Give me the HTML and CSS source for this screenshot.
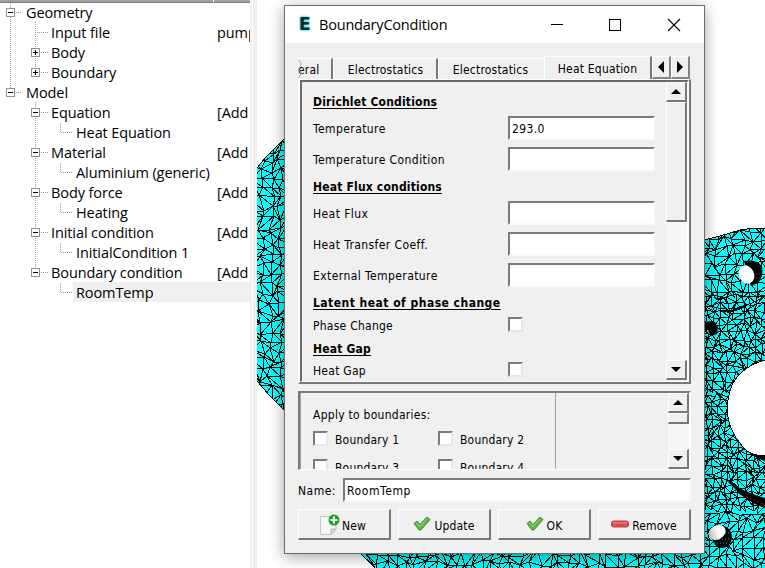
FILE: index.html
```html
<!DOCTYPE html>
<html lang="en">
<head>
<meta charset="utf-8">
<title>BoundaryCondition</title>
<link rel="stylesheet" href="styles.css">
</head>
<body>
<div class="app">
  <aside class="tree">
    <div class="tree-head"><span></span><span></span></div>
    <svg class="guides" width="80" height="310" fill="none" stroke="#9a9a9a" stroke-dasharray="1 1" shape-rendering="crispEdges">
      <path d="M10.5 3V93M35.5 22V73M35.5 102V273M16 12.5H22M16 92.5H22M37 32.5H48M41 52.5H48M41 72.5H48M41 112.5H48M41 152.5H48M41 192.5H48M41 232.5H48M41 272.5H48"/>
      <path d="M60.5 123V132.500H72M60.500 163V172.500H72M60.500 203V212.500H72M60.500 243V252.500H72M60.500 283V292.500H72"/>
    </svg>
    <ul class="rows">
      <li class="l0"><i class="tog"></i><span>Geometry</span></li>
      <li class="l1 leaf"><span>Input file</span><b>pump</b></li>
      <li class="l1"><i class="tog plus"></i><span>Body</span></li>
      <li class="l1"><i class="tog plus"></i><span>Boundary</span></li>
      <li class="l0"><i class="tog"></i><span>Model</span></li>
      <li class="l1"><i class="tog"></i><span>Equation</span><b>[Add</b></li>
      <li class="l2"><span>Heat Equation</span></li>
      <li class="l1"><i class="tog"></i><span>Material</span><b>[Add</b></li>
      <li class="l2"><span>Aluminium (generic)</span></li>
      <li class="l1"><i class="tog"></i><span>Body force</span><b>[Add</b></li>
      <li class="l2"><span>Heating</span></li>
      <li class="l1"><i class="tog"></i><span>Initial condition</span><b>[Add</b></li>
      <li class="l2"><span>InitialCondition 1</span></li>
      <li class="l1"><i class="tog"></i><span>Boundary condition</span><b>[Add</b></li>
      <li class="l2 selected"><span>RoomTemp</span></li>
    </ul>
  </aside>
  <div class="splitter"></div>
  <main class="view">
    <svg id="mesh" width="508" height="568" viewBox="257 0 508 568">
      <defs><clipPath id="part"><path d="M257 168L266 157L275 148L284 139H320V446L284 410L270 396L257 381ZM360 553L375 568H765V228H755L740 230L720 236L704 240H600V553Z"/></clipPath>
      <linearGradient id="g"><stop offset="0" stop-color="#ccc"/><stop offset=".6" stop-color="#fff"/></linearGradient></defs>
      <g clip-path="url(#part)">
        <rect x="257" width="508" height="568" fill="#00ffff"/>
        <path id="lines" fill="none" stroke="#000" stroke-width="1" shape-rendering="crispEdges"/>
      </g>
      <g fill="none" stroke="#000" shape-rendering="crispEdges">
        <path d="M257 168L266 157L275 148L284 139M257 381L270 396L284 410M360 553L375 568M704 240L720 236L740 230L755 228H765"/>
        <path d="M705 303Q730 318 765 296" stroke-width="1"/>
        <path d="M720 311Q735 313 746 305" stroke-width="2"/>
      </g>
      <path d="M744 261Q758 259 762 267Q764 276 758 283L751 286Z"/>
      <path d="M753 266h8M755 270h8M756 274h6M756 278h5" stroke="#066" stroke-dasharray="1 2" fill="none"/>
      <ellipse cx="746.500" cy="274.500" rx="7.500" ry="9.500" transform="rotate(-25 746.500 274.500)" fill="#fff"/>
      <path d="M704 322l9-1 5 6-1 7-6 2-3-6h-4z"/>
      <path d="M765 360Q743 366 733 383Q728 393 727 410Q729 434 747 451Q755 456 765 456Z" fill="#fff" stroke="#000" shape-rendering="crispEdges"/>
      <path d="M747 451Q755 458 765 461V456Q755 456 747 451Z"/>
      <path d="M726 480Q745 493 765 498V508Q745 501 734 488Z"/>
      <path d="M746 497L765 505" stroke="#700" stroke-width="2" stroke-dasharray="2 2"/>
      <ellipse cx="722" cy="537" rx="10" ry="11"/>
      <path d="M714 543h14M719 539h11M725 533h5" stroke="#066" stroke-width="2" stroke-dasharray="1 2"/>
      <ellipse cx="717" cy="532.500" rx="9" ry="7" transform="rotate(-30 717 532.500)" fill="url(#g)"/>
    </svg>
  </main>
</div>

<section class="window">
  <header class="titlebar">
    <span class="logo">E</span>
    <h1>BoundaryCondition</h1>
    <svg class="winbtns" width="132" height="14" fill="none" stroke="#000">
      <path d="M0 6.500H12M58.500 1.500H69.500V12.500H58.500Z" shape-rendering="crispEdges"/>
      <path d="M117 1L129 13M129 1L117 13" stroke-width="1.100"/>
    </svg>
  </header>
  <div class="body">
    <nav class="tabs">
      <span class="tab t1"><svg class="tear" width="5" height="18" fill="none" stroke="#aaa"><path d="M.5 0l3 4-3 5 3 4-3 5"/></svg>eral</span>
      <span class="tab t2">Electrostatics</span>
      <span class="tab t3">Electrostatics</span>
      <span class="tab active">Heat Equation</span>
      <span class="tabbtn"><svg width="6" height="12"><path d="M6 0V12L0 6Z"/></svg></span>
      <span class="tabbtn"><svg width="6" height="12"><path d="M0 0V12L6 6Z"/></svg></span>
    </nav>
    <div class="pane">
      <div class="sunken">
        <div class="form">
          <h2>Dirichlet Conditions</h2>
          <label><span>Temperature</span><i class="field">293.0</i></label>
          <label><span>Temperature Condition</span><i class="field"></i></label>
          <h2>Heat Flux conditions</h2>
          <label><span>Heat Flux</span><i class="field"></i></label>
          <label><span>Heat Transfer Coeff.</span><i class="field"></i></label>
          <label><span>External Temperature</span><i class="field"></i></label>
          <h2 class="wide">Latent heat of phase change</h2>
          <label class="chk"><span>Phase Change</span><i class="box"></i></label>
          <h2 class="last">Heat Gap</h2>
          <label class="chk"><span>Heat Gap</span><i class="box"></i></label>
        </div>
        <div class="scroll">
          <span class="sbtn"><svg width="10" height="5"><path d="M0 5H10L5 0Z"/></svg></span>
          <span class="thumb"></span><span class="track"></span>
          <span class="sbtn"><svg width="10" height="5"><path d="M0 0H10L5 5Z"/></svg></span>
        </div>
      </div>
    </div>
    <div class="bounds">
      <div class="blist">
        <p>Apply to boundaries:</p>
        <div class="checks">
          <span><i class="box"></i>Boundary 1</span><span><i class="box"></i>Boundary 2</span>
          <span><i class="box"></i>Boundary 3</span><span><i class="box"></i>Boundary 4</span>
        </div>
      </div>
      <div class="scroll">
        <span class="sbtn"><svg width="10" height="5"><path d="M0 5H10L5 0Z"/></svg></span>
        <span class="thumb"></span><span class="track"></span>
        <span class="sbtn"><svg width="10" height="5"><path d="M0 0H10L5 5Z"/></svg></span>
      </div>
    </div>
    <div class="name"><span>Name:</span><i class="field">RoomTemp</i></div>
    <div class="buttons">
      <button class="new"><svg width="21" height="21"><path d="M1.500 2.500H17V15L12 20.500H1.500Z" fill="#f6f6f6" stroke="#c4c4c4"/><path d="M12 20.500V15H17Z" fill="#ddd" stroke="#bbb"/><circle cx="15" cy="6" r="5.500" fill="#19a51e"/><path d="M15 2.500V9.500M11.500 6H18.500" stroke="#fff" stroke-width="2"/></svg><span>New</span></button>
      <button class="upd"><svg width="18" height="16"><path d="M1 7.500L4 5L7 8.500L14 1L17 3.500L8 14H6Z" fill="#58b83c" stroke="#4a8d3c" stroke-linejoin="round"/><path d="M3 7L7 10.500L14 3" fill="none" stroke="#9bd48c"/></svg><span>Update</span></button>
      <button class="ok"><svg width="18" height="16"><path d="M1 7.500L4 5L7 8.500L14 1L17 3.500L8 14H6Z" fill="#58b83c" stroke="#4a8d3c" stroke-linejoin="round"/><path d="M3 7L7 10.500L14 3" fill="none" stroke="#9bd48c"/></svg><span>OK</span></button>
      <button class="rem"><svg width="18" height="8"><rect x=".5" y="1" width="17" height="6" rx="2" fill="#dc4a50" stroke="#b8484c"/><path d="M2 3H16" stroke="#ef9498"/></svg><span>Remove</span></button>
    </div>
  </div>
</section>
<script src="mesh.js"></script>
</body>
</html>
```
FILE: styles.css
```css
* { box-sizing: border-box; }
body { margin: 0; width: 765px; height: 568px; overflow: hidden; background: #fff; color: #000; font: 12px "DejaVu Sans Condensed", "DejaVu Sans", sans-serif; letter-spacing: .2px; }
i, b { font-style: normal; font-weight: normal; }
.app { display: flex; height: 568px; }

.tree { position: relative; width: 250px; flex: none; overflow: hidden; font: 14.5px "Open Sans", sans-serif; }
.tree-head { display: flex; height: 3px; background: #a0a0a0; border-bottom: 1px solid #808080; }
.tree-head span:first-child { width: 214px; border-right: 1px solid #fff; }
.guides { position: absolute; left: 0; top: 0; }
.rows { list-style: none; margin: 0; padding: 0; position: relative; }
.rows li { display: flex; align-items: center; height: 20px; white-space: pre; letter-spacing: -.1px; line-height: 18px; padding-bottom: 1px; }
.rows li span { flex: none; }
.rows b { margin-left: auto; width: 33px; flex: none; }
.l0 { padding-left: 6px; }
.l1 { padding-left: 31px; }
.l1.leaf { padding-left: 51px; }
.l2 { padding-left: 3px; margin-left: 73px; }
.rows .selected { background: #f0f0f0; margin-top: -1px; padding: 1px 0 0 3px; }
.tog { width: 9px; height: 9px; flex: none; margin-right: 11px; border: 1px solid #919191; background: linear-gradient(#000, #000) center/5px 1px no-repeat #fff; }
.plus { background: linear-gradient(#000, #000) center/5px 1px no-repeat, linear-gradient(#000, #000) center/1px 5px no-repeat #fff; }
.splitter { width: 7px; flex: none; background: #f0f0f0; border-left: 2px solid #f0f0f0; box-shadow: inset 1px 0 #fff; }
.view svg { display: block; }

.window { position: absolute; left: 284px; top: 5px; width: 421px; height: 549px; border: 1px solid #6d6d6d; background: #f0f0f0; box-shadow: 0 3px 14px rgba(0,0,0,.36); display: flex; flex-direction: column; }
.titlebar { display: flex; align-items: center; height: 37px; background: #fff; padding-left: 14px; flex: none; }
.logo { width: 10px; font: bold 17px/17px "DejaVu Sans", sans-serif; color: #222; text-shadow: 0 0 2px #0ee, 0 0 3px #0ee; }
h1 { margin: 0 0 0 10px; font: 14.5px "Open Sans", sans-serif; letter-spacing: -.2px; }
.winbtns { margin-left: auto; margin-right: 21px; width: 132px; }
.body { padding: 13px 13px 13px; display: flex; flex-direction: column; }

.tabs { display: flex; height: 23px; align-items: flex-end; flex: none; white-space: nowrap; }
.tab { height: 21px; flex: none; display: flex; align-items: center; justify-content: center; padding-top: 1px; border-top: 1px solid #fff; border-right: 2px solid #787878; border-left: 1px solid #fff; }
.t1 { width: 35px; position: relative; border-left: 0; justify-content: flex-start; overflow: hidden; }
.tear { position: absolute; left: 0; top: 1px; }
.t2 { width: 105px; padding-left: 1px; }
.t3 { width: 106px; padding-right: 2px; border-right: 0; }
.active { width: 108px; height: 23px; }
.tabbtn { width: 19px; height: 23px; display: flex; align-items: center; justify-content: center; border: 1px solid #fff; border-right: 2px solid #858585; border-bottom: 2px solid #858585; }

.pane { height: 305px; flex: none; border: 1px solid #fff; border-left-width: 2px; border-right: 2px solid #787878; border-bottom: 2px solid #787878; }
.sunken { display: flex; justify-content: space-between; height: 302px; border: 2px solid #696969; border-color: #696969 #fff #fff #696969; border-right-width: 2px; border-bottom-width: 1px; }
.form { width: 355px; padding: 11px 0 0 11px; display: flex; flex-direction: column; gap: 7px; }
.form h2 { margin: 0; height: 16px; font: bold 12px/18px "DejaVu Sans Condensed", sans-serif; letter-spacing: .18px; text-decoration: underline; text-underline-offset: 2px; white-space: nowrap; }
.form .wide { letter-spacing: .48px; }
.form .last { line-height: 20px; }
.form label { display: flex; align-items: center; height: 24px; }
.form label > span { width: 195px; flex: none; white-space: nowrap; letter-spacing: .42px; padding-top: 2px; }
.form .chk { height: 15px; }
.form .chk > span { letter-spacing: .25px; }
.field { display: flex; align-items: center; width: 147px; height: 24px; background: #fff; border: 2px solid #696969; border-color: #7b7b7b #fafafa #fafafa #7b7b7b; padding: 1px 0 0 2px; letter-spacing: .35px; }
.name .field { letter-spacing: .6px; }
.box { width: 15px; height: 15px; flex: none; background: #fff; border: 2px solid #777; border-color: #7b7b7b #e6e6e6 #e6e6e6 #7b7b7b; }

.scroll { display: flex; flex-direction: column; width: 21px; flex: none; }
.sbtn { height: 20px; flex: none; display: flex; align-items: center; justify-content: center; border: 1px solid #fff; border-right: 2px solid #787878; border-bottom: 2px solid #787878; }
.thumb { height: 120px; flex: none; border: 1px solid #fff; border-right: 2px solid #787878; border-bottom: 2px solid #787878; }
.track { flex: 1; background: repeating-conic-gradient(#fff 0 25%, #f0f0f0 0 50%) 0 0/2px 2px; }
.pane .scroll { padding-bottom: 1px; }

.bounds { display: flex; justify-content: space-between; margin-top: 7px; height: 79px; flex: none; overflow: hidden; border: 2px solid #7b7b7b; border-right-color: #fff; border-bottom: 1px solid #fff; }
.bounds .thumb { height: 11px; }
.blist { width: 256px; padding: 15px 0 0 12px; border: solid #a0a0a0; border-width: 0 1px 0 1px; }
.blist p { margin: 0 0 8px; line-height: 15px; letter-spacing: .27px; }
.checks { display: grid; grid-template-columns: 125px 125px; row-gap: 13px; }
.checks span { display: flex; gap: 7px; height: 15px; line-height: 19px; white-space: nowrap; }
.name { display: flex; align-items: center; justify-content: space-between; margin-top: 8px; height: 24px; flex: none; }
.name > span { letter-spacing: .5px; padding-top: 2px; }
.name .field { width: 348px; }
.buttons { display: grid; grid-template-columns: repeat(4, 93px); gap: 7px; margin-top: 7px; }
button { height: 31px; padding: 0; display: flex; align-items: center; justify-content: center; gap: 3px; font: inherit; letter-spacing: .15px; background: #f0f0f0; border: 1px solid #fff; border-right: 2px solid #787878; border-bottom: 2px solid #787878; color: #000; }
button span { padding-top: 3px; }
.new { padding-right: 3px; gap: 2px; }
```
FILE: mesh.js
```js
// Builds a jittered triangular mesh over the part; cells shrink on the right side.
(function () {
  var seed = 7;
  function rnd() { seed = (seed * 16807) % 2147483647; return seed / 2147483647; }
  function patch(x0, y0, x1, y1, s) {
    var p = [], d = '';
    for (var r = 0; y0 + r * s <= y1 + s; r++) {
      p[r] = [];
      for (var c = 0; x0 + c * s <= x1 + s; c++) {
        p[r][c] = [Math.round(x0 + c * s + (rnd() - .5) * s * .75), Math.round(y0 + r * s + (rnd() - .5) * s * .75)];
      }
    }
    function seg(a, b) { d += 'M' + a[0] + ' ' + a[1] + 'L' + b[0] + ' ' + b[1]; }
    for (r = 0; r < p.length - 1; r++) for (c = 0; c < p[r].length - 1; c++) {
      seg(p[r][c], p[r][c + 1]);
      seg(p[r][c], p[r + 1][c]);
      if (rnd() > .5) seg(p[r][c], p[r + 1][c + 1]); else seg(p[r][c + 1], p[r + 1][c]);
    }
    return d;
  }
  document.getElementById('lines').setAttribute('d',
    patch(252, 132, 290, 412, 9.5) + patch(350, 545, 700, 572, 9.5) +
    patch(700, 222, 770, 296, 8.5) + patch(700, 297, 770, 391, 7) +
    patch(700, 395, 770, 508, 6.5) + patch(700, 512, 770, 572, 9));
})();
```
